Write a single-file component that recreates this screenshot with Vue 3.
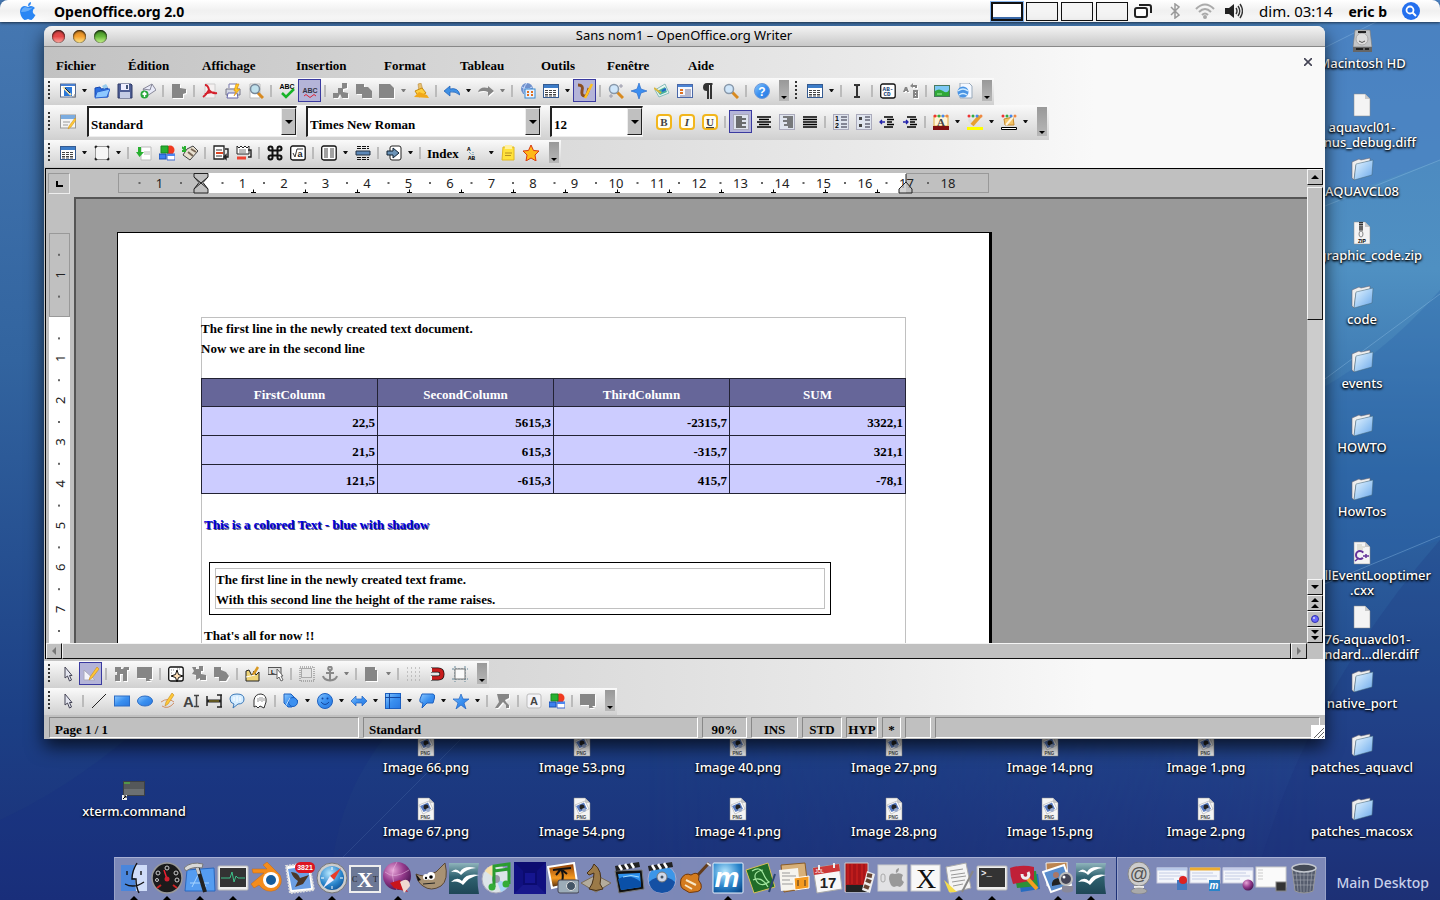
<template>
  <div class="desktop">
    <svg class="wallpaper" viewBox="0 0 1440 900" preserveAspectRatio="none" aria-hidden="true">
      <defs>
        <linearGradient id="glass" x1="0" y1="0" x2="1" y2="1"><stop offset="0" stop-color="#e8f5ff"/><stop offset=".5" stop-color="#a8d0f6"/><stop offset="1" stop-color="#6aa6ea"/></linearGradient>
        <linearGradient id="blue" x1="0" y1="0" x2="1" y2="1"><stop offset="0" stop-color="#8cc8ff"/><stop offset=".5" stop-color="#3a90f0"/><stop offset="1" stop-color="#2a78e0"/></linearGradient>
        <linearGradient id="sea" x1="0" y1="0" x2="0" y2="1"><stop offset="0" stop-color="#8fb4bc"/><stop offset=".45" stop-color="#2f6270"/><stop offset="1" stop-color="#1e4656"/></linearGradient>
        <linearGradient id="sunset" x1="0" y1="0" x2="0" y2="1"><stop offset="0" stop-color="#8a3a08"/><stop offset=".6" stop-color="#f59a20"/><stop offset="1" stop-color="#40200c"/></linearGradient>
        <radialGradient id="purple" cx=".35" cy=".3" r=".8"><stop offset="0" stop-color="#e7a6d8"/><stop offset=".5" stop-color="#953a8c"/><stop offset="1" stop-color="#3c1048"/></radialGradient>
        <radialGradient id="ocean" cx=".4" cy=".3" r=".8"><stop offset="0" stop-color="#b8e8ff"/><stop offset=".6" stop-color="#2b86cc"/><stop offset="1" stop-color="#0c4c90"/></radialGradient>
        <linearGradient id="sky" x1="0" y1="0" x2="0" y2="1"><stop offset="0" stop-color="#4678b2"/><stop offset=".4" stop-color="#32649f"/><stop offset=".8" stop-color="#1c3f85"/><stop offset="1" stop-color="#1b2f78"/></linearGradient>
        <linearGradient id="east" x1="0" y1="0" x2="0" y2="1"><stop offset="0" stop-color="#4a83bf"/><stop offset=".3" stop-color="#4f90c2"/><stop offset=".52" stop-color="#3169a6"/><stop offset=".72" stop-color="#255092"/><stop offset=".9" stop-color="#203a83"/><stop offset="1" stop-color="#1e3175"/></linearGradient>
        <linearGradient id="fade" x1="0" y1="0" x2="1" y2="0"><stop offset=".45" stop-color="#000"/><stop offset=".92" stop-color="#fff"/></linearGradient>
        <mask id="half"><rect width="1440" height="900" fill="url(#fade)"/></mask>
      </defs>
      <rect width="1440" height="900" fill="url(#sky)"/>
      <rect width="1440" height="900" fill="url(#east)" mask="url(#half)"/>
      <path d="M0 820Q130 760 240 620L420 700Q330 780 330 900H0Z" fill="#183080" opacity=".3"/>
      <path d="M1250 900Q1300 700 1440 540V900Z" fill="#1b2f78" opacity=".2"/>
      <path d="M1280 120L1340 0H1440V160L1300 210Z" fill="#4a7fc4" opacity=".5"/>
      <path d="M1300 400Q1380 360 1440 290V540L1300 590Z" fill="#2c64a8" opacity=".35"/>
      <path d="M1270 75L1380 20M1290 220L1440 160M1310 390L1440 294M1310 590L1440 536" stroke="#9cc8ec" stroke-opacity=".35" fill="none"/>
      <path d="M330 870L480 720" stroke="#9cc8ec" stroke-opacity=".12" fill="none"/>
    </svg>

    <header class="menubar">
      <svg class="apple" viewBox="0 0 16 18" width="16" height="18"><path d="M11 0Q8 .6 8 4Q11 4 11 0ZM8 5Q6 4 4 4Q0 5 0 10Q1 16 4.500 18Q6 18 8 17Q10 18 11.500 18Q14 16 15.500 13Q12.500 11.500 12.800 9Q13 7 15 6Q13 4 11 4Q9.500 4.200 8 5Z" fill="#2a86f4"/><path d="M1 10Q2 6 5 5Q10 7 13 5Q10 10 1 10Z" fill="#8cc6ff" opacity=".6"/></svg>
      <strong class="app-name">OpenOffice.org 2.0</strong>
      <div class="pager"><i v-for="n in 4" :key="n" :class="{ current: n === 1 }"></i></div>
      <svg viewBox="0 0 18 16" width="18" height="16" fill="none" stroke="#222" stroke-width="2"><rect x="1" y="5" width="12" height="9" rx="2" fill="#fff"/><path d="M5 2H15Q17 2 17 4V10"/></svg>
      <svg class="bt" viewBox="0 0 10 16" width="10" height="16" fill="none" stroke="#999" stroke-width="1.500"><path d="M1 4L9 12L5 15V1L9 4L1 12"/></svg>
      <svg viewBox="0 0 20 16" width="20" height="16" fill="none" stroke="#aaa" stroke-width="2"><path d="M1 6Q10 -3 19 6M4 9Q10 3 16 9M7 12Q10 9 13 12"/><circle cx="10" cy="14" r="1" fill="#aaa"/></svg>
      <svg viewBox="0 0 18 16" width="18" height="16"><path d="M0 5H4L9 1V15L4 11H0Z" fill="#222"/><path d="M11 5Q13 8 11 11M13 3Q16.500 8 13 13M15 1Q20 8 15 15" fill="none" stroke="#333" stroke-width="1.400"/></svg>
      <span class="clock">dim. 03:14</span>
      <strong class="user">eric b</strong>
      <svg class="spot" viewBox="0 0 18 18" width="18" height="18"><circle cx="9" cy="9" r="9" fill="#2470ee"/><circle cx="8" cy="8" r="3.500" fill="none" stroke="#fff" stroke-width="1.800"/><path d="M10.500 10.500L14 14" stroke="#fff" stroke-width="2"/></svg>
    </header>

    <div class="volumes">
      <figure v-for="f in volumes" :key="f.label" class="file">
        <svg viewBox="0 0 24 24" width="24" height="24" v-html="files[f.icon]"></svg>
        <figcaption>{{ f.label }}</figcaption>
      </figure>
    </div>
    <div class="shots">
      <figure v-for="n in shots" :key="n" class="file">
        <svg viewBox="0 0 24 24" width="24" height="24" v-html="files.png"></svg>
        <figcaption>Image {{ n }}.png</figcaption>
      </figure>
    </div>
    <figure class="file xterm">
      <svg viewBox="0 0 24 24" width="24" height="24" v-html="files.term"></svg>
      <figcaption>xterm.command</figcaption>
    </figure>

    <main class="window">
      <div class="titlebar">
        <div class="lights">
          <button class="red" aria-label="Fermer"></button>
          <button class="amber" aria-label="Réduire"></button>
          <button class="green" aria-label="Agrandir"></button>
        </div>
        <h1>Sans nom1 – OpenOffice.org Writer</h1>
      </div>

      <nav class="menus">
        <button v-for="m in menus" :key="m.label" :style="{ width: m.width + 'px' }">{{ m.label }}</button>
        <button class="close-doc" aria-label="Fermer le document"><svg viewBox="0 0 8 8" width="8" height="8"><path d="M0 0L8 8M8 0L0 8" stroke="#445" stroke-width="1.600"/></svg></button>
      </nav>

      <div v-for="(row, r) in topRows" :key="r" class="row" :class="{ tall: r === 1 }">
        <div v-for="(bar, b) in row" :key="b" class="bar">
          <i class="grip"></i>
          <template v-for="(t, i) in bar" :key="i">
            <i v-if="t === '|'" class="sep"></i>
            <button v-else-if="t === 'v' || t === 'g'" class="drop" :class="{ dim: t === 'g' }" aria-label="Options"></button>
            <div v-else-if="t === 'combos'" class="combos">
              <label v-for="c in combos" :key="c.label" class="combo" :class="c.size">
                <select :aria-label="c.label"><option>{{ c.value }}</option></select><i></i>
              </label>
            </div>
            <button v-else-if="t === 'Index'" class="word">Index</button>
            <button v-else class="tool" :class="{ on: t[0] === '*' }" :aria-label="t.replace('*', '')">
              <svg viewBox="0 0 16 16" width="16" height="16" v-html="icons[t.replace('*', '')]"></svg>
            </button>
          </template>
          <button class="more" aria-label="Plus"></button>
        </div>
      </div>

      <section class="editor">
        <div class="view">
          <div class="top-ruler">
            <button class="tab-kind" aria-label="Tabulation"><svg viewBox="0 0 8 8" width="8" height="8"><path d="M1 1V6H7" fill="none" stroke="#000" stroke-width="2"/></svg></button>
            <svg width="872" height="21" viewBox="0 0 872 21">
              <rect x=".5" y=".5" width="870" height="19" fill="#c0c0c0" stroke="#999"/>
              <rect x="83" y="0" width="705" height="20" fill="#fff"/>
              <text v-for="n in 20" :key="n" :x="n * 41.5" y="15">{{ n === 2 ? '' : Math.abs(n - 2) }}</text>
              <rect v-for="n in 20" :key="'d' + n" :x="n * 41.5 - 21" y="9" width="2" height="2" fill="#666"/>
              <path v-for="n in 13" :key="'t' + n" :d="`M${n * 52 + 81} 19.500h5m-2.500 0v-3`" stroke="#000" fill="none"/>
              <path d="M76 .5H90V4L85 9.500L90 16V20H76V16L81 9.500L76 4Z" fill="#c0c0c0" stroke="#222"/><path d="M76 4L90 16M90 4L76 16" stroke="#222"/>
              <path d="M788 1V9M788 9L794 16V20H781V16Z" fill="#c0c0c0" fill-opacity=".7" stroke="#222"/>
            </svg>
          </div>
          <div class="pane">
            <div class="side-ruler">
              <svg width="22" height="446" viewBox="0 0 22 446">
                <rect x=".5" y="36.500" width="20" height="83" fill="#c0c0c0" stroke="#999"/>
                <rect x="0" y="120" width="21" height="330" fill="#fff"/>
                <text v-for="n in 9" :key="n" x="0" y="0" :transform="`translate(16 ${n * 41.8 + 36}) rotate(-90)`">{{ n === 2 ? '' : Math.abs(n - 2) }}</text>
                <rect v-for="n in 10" :key="'d' + n" x="9" :y="n * 41.8 + 15" width="2" height="2" fill="#666"/>
              </svg>
            </div>
            <div class="canvas">
              <article class="page">
                <div class="text-area">
                  <p>The first line in the newly created text document.</p>
                  <p>Now we are in the second line</p>
                  <table>
                    <thead><tr><th v-for="h in head" :key="h">{{ h }}</th></tr></thead>
                    <tbody><tr v-for="line in body" :key="line[0]"><td v-for="c in line" :key="c">{{ c }}</td></tr></tbody>
                  </table>
                  <p class="blue">This is a colored Text - blue with shadow</p>
                  <div class="text-frame">
                    <div>
                      <p>The first line in the newly created text frame.</p>
                      <p>With this second line the height of the rame raises.</p>
                    </div>
                  </div>
                  <p class="last">That's all for now !!</p>
                </div>
              </article>
            </div>
          </div>
          <div class="hscroll">
            <button aria-label="Gauche"><svg viewBox="0 0 8 8" width="8" height="8"><path d="M6 0V8L2 4Z" fill="#777"/></svg></button>
            <i class="thumb"></i>
            <button aria-label="Droite"><svg viewBox="0 0 8 8" width="8" height="8"><path d="M2 0V8L6 4Z" fill="#777"/></svg></button>
          </div>
        </div>
        <div class="vscroll">
          <button aria-label="Haut"><svg viewBox="0 0 8 8" width="8" height="8"><path d="M0 6H8L4 2Z"/></svg></button>
          <i class="thumb"></i>
          <i class="track"></i>
          <button aria-label="Bas"><svg viewBox="0 0 8 8" width="8" height="8"><path d="M0 2H8L4 6Z"/></svg></button>
          <button aria-label="Page précédente"><svg viewBox="0 0 8 10" width="8" height="10"><path d="M0 4H8L4 0ZM0 10H8L4 6Z"/></svg></button>
          <button aria-label="Navigation"><svg viewBox="0 0 8 8" width="8" height="8"><circle cx="4" cy="4" r="3.500" fill="#66f" stroke="#33a"/><circle cx="3" cy="3" r="1" fill="#dde"/></svg></button>
          <button aria-label="Page suivante"><svg viewBox="0 0 8 10" width="8" height="10"><path d="M0 0H8L4 4ZM0 6H8L4 10Z"/></svg></button>
          <i class="corner"></i>
        </div>
      </section>

      <div v-for="(bar, r) in drawRows" :key="r" class="row">
        <div class="bar">
          <i class="grip"></i>
          <template v-for="(t, i) in bar" :key="i">
            <i v-if="t === '|'" class="sep"></i>
            <button v-else-if="t === 'v' || t === 'g'" class="drop" :class="{ dim: t === 'g' }" aria-label="Options"></button>
            <button v-else class="tool" :class="{ on: t[0] === '*' }" :aria-label="t.replace('*', '')">
              <svg viewBox="0 0 16 16" width="16" height="16" v-html="icons[t.replace('*', '')]"></svg>
            </button>
          </template>
          <button class="more" aria-label="Plus"></button>
        </div>
      </div>

      <footer class="status">
        <span v-for="(s, i) in status" :key="i" :class="{ centered: i > 1 }" :style="{ width: s.width + 'px' }">{{ s.text }}</span>
        <span class="rest"></span>
        <svg class="resize" viewBox="0 0 14 14" width="14" height="14"><rect width="14" height="14" fill="#fff"/><path d="M3 13L13 3M7 13L13 7M11 13L13 11" stroke="#666"/></svg>
      </footer>
    </main>

    <div class="dock">
      <div class="dock-apps">
        <button v-for="(a, i) in apps" :key="i" :class="{ running: a[0] === '*' }" :aria-label="a.replace('*', '')">
          <svg viewBox="0 0 32 32" width="32" height="32" v-html="dock[a.replace('*', '')]"></svg>
        </button>
      </div>
      <div class="dock-docs">
        <button v-for="a in docs" :key="a" :aria-label="a"><svg viewBox="0 0 32 32" width="32" height="32" v-html="dock[a]"></svg></button>
      </div>
    </div>
    <span class="space-name">Main Desktop</span>
  </div>
</template>

<script setup>
const menus = [
  {label: 'Fichier', width: 72},
  {label: 'Édition', width: 74},
  {label: 'Affichage', width: 94},
  {label: 'Insertion', width: 88},
  {label: 'Format', width: 76},
  {label: 'Tableau', width: 81},
  {label: 'Outils', width: 66},
  {label: 'Fenêtre', width: 81},
  {label: 'Aide', width: 60},
];

const combos = [
  {label: 'Style', value: 'Standard', size: 'medium'},
  {label: 'Police', value: 'Times New Roman', size: 'large'},
  {label: 'Taille', value: '12', size: 'small'},
];

const status = [
  {text: 'Page 1 / 1', width: 310},
  {text: 'Standard', width: 335},
  {text: '90%', width: 45},
  {text: 'INS', width: 47},
  {text: 'STD', width: 40},
  {text: 'HYP', width: 32},
  {text: '*', width: 19},
  {text: '', width: 26},
];

// "|" séparateur, "v" flèche, "g" flèche grisée, "*" bouton enfoncé
const bar = (s) => s.split(' ');
const topRows = [
  [
    bar('new v open save mail | edit | pdf print preview | spell *abc | cut copy paste g brush | undo v redo g | web table v *draw | find compass gallery source pilcrow zoom | help'),
    bar('table v | ibeam | abcd swap | image html'),
  ],
  [bar('styles combos bold italic under | *left center right justify | numbers bullets outdent indent | fontcolor v marker v bucket v')],
  [bar('table v frame v | insert shapes object | section note | command formula | columns v header | goto v | Index ab v sticky star')],
];
const drawRows = [
  bar('cursor *pencil | wizard flat | pick puzzle group | crown button | dotframe anchor g | flatpage g | dots magnet snap'),
  bar('cursor | line rect ellipse freehand text hline balloon ghost | basic v smile v arrows v flow v callout v bstar v | points | fontwork shapes | flat'),
];

const head = ['FirstColumn', 'SecondColumn', 'ThirdColumn', 'SUM'];
const body = [
  ['22,5', '5615,3', '-2315,7', '3322,1'],
  ['21,5', '615,3', '-315,7', '321,1'],
  ['121,5', '-615,3', '415,7', '-78,1'],
];

const volumes = [
  {icon: 'disk', label: 'Macintosh HD'},
  {icon: 'page', label: 'aquavcl01-\nminus_debug.diff'},
  {icon: 'folder', label: 'AQUAVCL08'},
  {icon: 'zip', label: 'vclgraphic_code.zip'},
  {icon: 'folder', label: 'code'},
  {icon: 'folder', label: 'events'},
  {icon: 'folder', label: 'HOWTO'},
  {icon: 'folder', label: 'HowTos'},
  {icon: 'cxx', label: 'InstallEventLooptimer\n.cxx'},
  {icon: 'page', label: 'i576-aquavcl01-\nstandard…dler.diff'},
  {icon: 'folder', label: 'native_port'},
  {icon: 'folder', label: 'patches_aquavcl'},
  {icon: 'folder', label: 'patches_macosx'},
];
const shots = [66, 53, 40, 27, 14, 1, 67, 54, 41, 28, 15, 2];

const sheet = '<path d="M4 1H15L20 6V23H4Z" fill="#f4f4f4" stroke="#888" stroke-width=".5"/><path d="M15 1V6H20Z" fill="#c8c8c8"/>';
const files = {
  page: sheet,
  folder: '<path d="M2 5L9 2L11 3L20 1V4L6 8L4 23L2 21Z" fill="#eee" stroke="#667" stroke-width=".6"/><path d="M6 7L23 3L22 18L4 23Z" fill="url(#glass)" stroke="#467" stroke-width=".5"/>',
  zip: sheet + '<path d="M11 1V10" stroke="#333" stroke-width="4" stroke-dasharray="1.500 .6"/><ellipse cx="11" cy="13" rx="2" ry="3" fill="none" stroke="#888"/><text x="8" y="22" font-size="5" font-weight="bold" font-family="Liberation Sans, sans-serif">ZIP</text>',
  cxx: sheet + '<path d="M7 4H12M7 6H15M7 8H13" stroke="#ccb"/><circle cx="10" cy="14" r="4" fill="none" stroke="#639" stroke-width="2" stroke-dasharray="19 6" stroke-dashoffset="-3"/><path d="M5 20L9 17M13 15H19M16 13V17" stroke="#639" stroke-width="1.500"/>',
  png: sheet + '<path d="M5 8L15 4L19 12L9 17Z" fill="#fff" stroke="#999" stroke-width=".5"/><path d="M6 9L14 5.500L17 12L9.500 15Z" fill="#5a7cc0"/><circle cx="12" cy="10" r="2.500" fill="#222"/><circle cx="14" cy="13" r="2" fill="#9ac"/><text x="6.500" y="22" font-size="4.500" font-weight="bold" fill="#444" font-family="Liberation Sans, sans-serif" style="text-shadow:none">PNG</text>',
  disk: '<path d="M5 1H20L22 18H3Z" fill="#c4c6c8" stroke="#777" stroke-width=".6"/><path d="M3 18H22V23H3Z" fill="#666"/><path d="M6 20H13M15 20H19" stroke="#222" stroke-width="2"/><circle cx="12" cy="10" r="6" fill="#ddd" stroke="#aaa"/><path d="M8 3H16" stroke="#222" stroke-width="2"/><path d="M9 12Q12 15 15 12" fill="none" stroke="#555"/>',
  term: '<rect x="1.500" y="4.500" width="21" height="14" fill="#55585a" stroke="#3c4044"/><path d="M2 6H8" stroke="#5a4" stroke-width="1.500"/><path d="M2 12H22V18H2Z" fill="#84888a" opacity=".5"/><path d="M0 18H5V23H0Z" fill="#eee"/><path d="M1 22L4 19M2 19H4V21" stroke="#000" fill="none"/>',
};

const tab = '<rect x=".5" y="1.500" width="15" height="13" fill="#fff" stroke="#345a90"/><path d="M1 2H15V5H1Z" fill="#3c7cc8"/><path d="M2 7.500H14M2 9.500H14M2 11.500H14M2 13H14" stroke="#444" stroke-dasharray="3 1"/>';
const box = '<rect x=".7" y="1" width="14.500" height="14" rx="2" fill="#fff" stroke="#111" stroke-width="1.300"/>';
const gold = '<rect x="1" y="1" width="14" height="14" rx="3" fill="#fffef4" stroke="#f2b61c" stroke-width="2"/>';
const lens = '<path d="M9 9L15 15" stroke="#d88a20" stroke-width="3"/><circle cx="6" cy="6" r="4.500" fill="#cfe6fa" stroke="#8898aa" stroke-width="1.500"/>';
const tile = '<rect x=".5" y=".5" width="15" height="15" fill="#dfe4ee" stroke="#aab"/>';
const letter = (c, style = '') => `<text x="8" y="12" text-anchor="middle" font-size="11" font-weight="bold" font-family="Liberation Serif, serif" fill="#444" ${style}>${c}</text>`;
const beads = '<circle cx="2" cy="2" r="1.500" fill="#e33"/><circle cx="6" cy="2" r="1.500" fill="#3a4"/><circle cx="10" cy="2" r="1.500" fill="#48e"/><circle cx="14" cy="2" r="1.500" fill="#e84"/>';
const grey = (d) => `<path d="${d}" transform="translate(1 1)" fill="#fff"/><path d="${d}" fill="#868686"/>`;

const icons = {
  new: '<rect x=".5" y="1" width="15" height="13" fill="#fff" stroke="#556a90"/><path d="M1 2H15" stroke="#4a80d0" stroke-width="2"/><path d="M4 4H12V13H4Z" fill="#2c78d8"/><path d="M3 4L11 12" stroke="#f2e2ac" stroke-width="2"/><path d="M5 5L10 10" stroke="#123" stroke-width="1"/><path d="M12 14H15V11" fill="#ccc" stroke="#888"/>',
  open: '<path d="M1 5L6 4L7 6L14 5V14H1Z" fill="#2a6ee0" stroke="#1648b0"/><path d="M8 3L12 1L14 4L10 6Z" fill="#9ce"/><path d="M3 9L16 6L13 14L1 15Z" fill="#8ec8ff" stroke="#2a62d0"/>',
  save: '<path d="M1 1H14L15 2V15H1Z" fill="#4e5e94" stroke="#2e3a68"/><path d="M4 1H12V7H4Z" fill="#eef"/><path d="M9 2H11V6H9Z" fill="#457"/><path d="M3 9H13V15H3Z" fill="#c4cce4"/>',
  mail: '<path d="M3 6L12 1L16 7L7 13Z" fill="#e8eaf8" stroke="#889"/><path d="M3 6L10 7L12 1" fill="none" stroke="#889"/><circle cx="4.500" cy="11.500" r="4" fill="#28a83c"/><path d="M4.500 14V10M2.500 11.500L4.500 9.500L6.500 11.500" stroke="#fff" stroke-width="1.400" fill="none"/>',
  edit: grey('M1 1H9V5L15 6V10L12 11V15H1Z'),
  pdf: '<path d="M3 1H13V15H3Z" fill="#f4f0f0" stroke="#ccc"/><path d="M3 2Q6 2 7 7Q10 11 15 10M7 7Q4 12 1 14M3 11Q8 8 13 10" fill="none" stroke="#d4202c" stroke-width="2"/>',
  print: '<path d="M4 5V1H12V5" fill="#fff" stroke="#77a"/><path d="M1 6H15V12H1Z" fill="#d4d8e4" stroke="#778"/><path d="M3 10H12L13 15H2Z" fill="#fff" stroke="#66a"/><path d="M11 1L14 1L12 6H15L9 13L11 8H9Z" fill="#ffc820" stroke="#d98a10" stroke-width=".6"/>',
  preview: '<path d="M2 1H12V15H2Z" fill="#fff" stroke="#bbb"/><path d="M9 9L15 15" stroke="#d88a20" stroke-width="3"/><circle cx="7" cy="6" r="4.500" fill="#bfe0ec" stroke="#789" stroke-width="1.500"/>',
  spell: '<text x="8" y="6" text-anchor="middle" font-size="7" font-weight="bold" font-family="Liberation Sans, sans-serif">ABC</text><path d="M3 10L7 14L15 6" fill="none" stroke="#18b428" stroke-width="2.500"/>',
  abc: '<text x="8" y="10" text-anchor="middle" font-size="7" font-weight="bold" fill="#334" font-family="Liberation Sans, sans-serif">ABC</text><path d="M2 13Q4 10 6 13T10 13T14 13" fill="none" stroke="#d23"/>',
  cut: grey('M9 0H14V5L10 6V9L15 10V15H9L7 11L5 15H0V10H5V5H9Z'),
  copy: grey('M0 1H8V4H12L16 8V15H6V11H0Z'),
  paste: grey('M0 1H11L15 5V15H0Z'),
  brush: '<path d="M5 1L8 0L10 7L6 9Z" fill="#e8c070" stroke="#b08030" stroke-width=".5"/><path d="M2 8L9 5L13 10L6 14Z" fill="#ffd040" stroke="#c88c10"/><path d="M1 14L6 9L14 12L16 15Z" fill="#f2a818"/>',
  undo: '<path d="M0 8L6 3V6Q14 4 16 12Q11 8 6 9V13Z" fill="#3f90e4" stroke="#1b5cb4" stroke-width=".7"/>',
  redo: grey('M16 8L10 3V5Q2 3 0 9Q6 7 10 9V13Z'),
  web: '<circle cx="7" cy="6" r="6" fill="#6e90cc"/><path d="M2 4Q7 8 12 4M7 0Q2 5 5 12" stroke="#cdf" fill="none"/><rect x="5" y="6" width="10" height="9" fill="#e8f2ff" stroke="#3b8ad0"/><path d="M7 9H9M7 12H9M11 9H13M11 12H13" stroke="#e07020" stroke-width="2"/>',
  table: tab,
  draw: '<path d="M1 2Q7 2 5 8Q4 13 8 13Q10 13 12 5" fill="none" stroke="#8c5020" stroke-width="3"/><path d="M15 1L10 11L8 15" stroke="#ffc020" stroke-width="2.500"/>',
  find: lens + '<path d="M11 3H15M13 1V5M1 13H5M3 11V15" stroke="#99a"/>',
  compass: '<path d="M8 0L10 6L16 8L10 10L8 16L6 10L0 8L6 6Z" fill="#3c8ef0" stroke="#2164c8" stroke-width=".6"/>',
  gallery: '<path d="M1 7L11 1L15 10L5 14Z" fill="#e8f6f0" stroke="#8bb"/><path d="M3 8L11 4L13 9L6 12Z" fill="#46b0a0"/><path d="M0 5L7 10" stroke="#d8b840" stroke-width="2"/><path d="M8 8L12 6" stroke="#2464c8" stroke-width="2"/>',
  source: '<rect x=".5" y="1.500" width="15" height="13" fill="#f4f8ff" stroke="#4a68a8"/><path d="M1 3H15" stroke="#4c84d4" stroke-width="2"/><path d="M3 7H6M3 10H6" stroke="#e07020" stroke-width="2"/><path d="M8 7H14M8 9H14M8 11H14M3 13H14" stroke="#779"/>',
  pilcrow: '<path d="M12.500 0H7Q3 0 3 4.500Q3 8 7 8V16H9V2H10V16H12V2H12.500Z" fill="#333"/>',
  zoom: lens,
  help: '<circle cx="8" cy="8" r="7.500" fill="url(#blue)" stroke="#6b98d8"/><text x="8" y="12.500" text-anchor="middle" font-size="12" font-weight="bold" fill="#fff" font-family="Liberation Sans, sans-serif">?</text>',
  ibeam: '<path d="M5 2H7L8 3L9 2H11M8 3V13M5 14H7L8 13L9 14H11" fill="none" stroke="#333" stroke-width="2"/>',
  abcd: box + '<text x="8" y="8" text-anchor="middle" font-size="6" font-weight="bold" fill="#123a70" font-family="Liberation Mono, monospace">AB-</text><text x="7" y="13" text-anchor="middle" font-size="6" font-weight="bold" fill="#123a70" font-family="Liberation Mono, monospace">CD</text>',
  swap: grey('M0 9L2 4H4L6 9H4V8H2V9ZM7 3L10 0V2H14V5H12V4H10V5ZM10 7H15V15H10Z') + '<path d="M12 9H13V10H12ZM12 12H13V13H12Z" fill="#fff"/>',
  image: '<rect x=".5" y="2.500" width="15" height="11" fill="#7cc8f4" stroke="#4a7a60"/><path d="M1 8Q5 5 9 8T15 7V13H1Z" fill="#30a838"/><path d="M3 11H8" stroke="#9cf0a0"/>',
  html: '<path d="M3 0H12L15 3V15H3Z" fill="#f4f8ff" stroke="#9ab"/><circle cx="6" cy="9" r="5.500" fill="#4a94e4"/><path d="M1 8Q6 4 11 8M2 12Q6 9 10 12" stroke="#d0ecff" stroke-width="1.500" fill="none"/>',
  styles: '<rect x=".5" y="1" width="15" height="13" fill="#f4f4f4" stroke="#999"/><path d="M1 1H15V5H1Z" fill="#7cacdf"/><path d="M3 8H10M3 11H8" stroke="#999"/><path d="M15 4L9 12L8 15L11 13L16 6Z" fill="#ffc838" stroke="#c88c18" stroke-width=".5"/>',
  bold: gold + letter('B'),
  italic: gold + letter('I', 'font-style="italic"'),
  under: gold + letter('U', 'text-decoration="underline"'),
  left: tile + '<path d="M3 3H9M3 5H13M3 7H9M3 9H13M3 11H9M3 13H13" stroke="#444" stroke-width="1.500"/>',
  center: '<path d="M1 3H15M3 5.500H13M1 8H15M3 10.500H13M1 13H15" stroke="#000" stroke-width="1.300"/>',
  right: tile + '<path d="M4 3H14M8 5H14M4 7H14M8 9H14M5 11H14M9 13H14" stroke="#555" stroke-width="1.500"/>',
  justify: '<path d="M1 3H15M1 5.500H15M1 8H15M1 10.500H15M1 13H15" stroke="#000" stroke-width="1.300"/>',
  numbers: tile + '<text x="2" y="7" font-size="7" font-family="Liberation Sans, sans-serif">1</text><text x="2" y="14" font-size="7" font-family="Liberation Sans, sans-serif">2</text><path d="M8 3H14M8 6H14M8 10H14M8 13H14" stroke="#667" stroke-width="1.500"/>',
  bullets: tile + '<path d="M3 3H6V6H3ZM3 10H6V13H3Z" fill="#444"/><path d="M9 3H14M9 6H14M9 10H14M9 13H14" stroke="#667" stroke-width="1.500"/>',
  outdent: '<path d="M5 3H14M8 5.500H15M8 8H13M8 10.500H15M5 13H14" stroke="#000" stroke-width="1.300"/><path d="M1 8H6M3 6L1 8L3 10" stroke="#22a" stroke-width="1.300" fill="none"/>',
  indent: '<path d="M5 3H14M8 5.500H15M8 8H13M8 10.500H15M5 13H14" stroke="#000" stroke-width="1.300"/><path d="M1 8H6M4 6L6 8L4 10" stroke="#22a" stroke-width="1.300" fill="none"/>',
  fontcolor: '<rect x="1" y="2" width="14" height="10" fill="#fff4d8" stroke="#e4b040"/>' + beads + letter('A') + '<path d="M0 12H16V16H0Z" fill="#801010"/>',
  marker: '<path d="M2 4L9 11L6 12L1 7Z" fill="#ddd"/><path d="M13 2L5 11" stroke="#e8a030" stroke-width="4"/>' + beads + '<path d="M0 13H16V16H0Z" fill="#ff0"/>',
  bucket: '<path d="M3 5L12 3L13 11H4Z" fill="#f4c468" stroke="#c88c30"/><path d="M12 3L5 11" stroke="#fff4dc" stroke-width="2"/>' + beads + '<path d="M.5 13.500H15.500V15.500H.5Z" fill="#fff" stroke="#000"/>',
  frame: '<rect x="1.500" y="1.500" width="13" height="13" fill="#f6f6f6" stroke="#999"/><path d="M1 1H3V2H2V3H1ZM13 1H15V3H14V2H13ZM1 13H2V14H3V15H1ZM14 13H15V15H13V14H14Z" fill="#222" stroke="#222" stroke-width=".6"/>',
  insert: '<path d="M5 2H15V15H5Z" fill="#fff" stroke="#bbb"/><path d="M2 2H5V7H8L3.500 12L0 7H2Z" fill="#28b030"/><path d="M8 8H14" stroke="#ddd" stroke-width="4"/>',
  shapes: '<circle cx="11" cy="5" r="4.500" fill="#f03a20"/><path d="M2 1H9V8H2Z" fill="#28b030" stroke="#178a20"/><path d="M0 9H7V14H0Z" fill="#3c80f0" stroke="#1c50b0"/><path d="M8 9H16V15H8Z" fill="#fff" stroke="#3c68d0"/><path d="M8 9H16V11H8Z" fill="#4c88f0"/>',
  object: '<path d="M5 4L11 1L16 6L8 15L1 10Z" fill="#e8e0d0" stroke="#444"/><path d="M6 7L11 11M9 4L14 7" stroke="#765" stroke-width="2"/><path d="M0 2L3 5M3 1V6H0" stroke="#28b030" stroke-width="2" fill="none"/>',
  section: '<path d="M1 1H11V14H1Z" fill="#fff" stroke="#222" stroke-width="1.300"/><path d="M3 5H9M3 11H9" stroke="#333"/><path d="M3 8H10" stroke="#d42" stroke-width="2"/><path d="M12 4H15V12H12M11 12L13 10V14Z" fill="none" stroke="#222" stroke-width="1.400"/>',
  note: '<path d="M1 1L3 3L5 1L7 3L9 1L11 3L13 1V9H1Z" fill="#fff" stroke="#222"/><path d="M3 5H10M3 7H10" stroke="#777"/><path d="M1 13H10" stroke="#e43" stroke-width="3"/><path d="M12 5H15V12H12" fill="none" stroke="#222" stroke-width="1.400"/>',
  command: '<path d="M5.500 5.500V3.500A2 2 0 1 0 3.500 5.500H12.500A2 2 0 1 0 10.500 3.500V12.500A2 2 0 1 0 12.500 10.500H3.500A2 2 0 1 0 5.500 12.500Z" fill="none" stroke="#111" stroke-width="2"/>',
  formula: box + '<path d="M3 8L5 12L7 4H13" fill="none" stroke="#333"/><text x="10" y="12" text-anchor="middle" font-size="9" fill="#222" font-family="Liberation Sans, sans-serif">a</text>',
  columns: box + '<path d="M3 4H7M3 6H7M3 8H7M3 10H7M3 12H7M9 4H13M9 6H13M9 8H13M9 10H13M9 12H13" stroke="#444"/>',
  header: '<path d="M2 1.500H14M2 3.500H14M2 12.500H14M2 14.500H14" stroke="#111" stroke-dasharray="4 1"/><path d="M1 6H15V10H1Z" fill="#5c88b8" stroke="#234"/>',
  goto: '<rect x="4" y="1" width="11" height="14" rx="2" fill="#fff" stroke="#222"/><path d="M1 6H7V3L13 8L7 13V10H1Z" fill="#6c94b8" stroke="#123"/>',
  ab: '<text x="1" y="6" font-size="6" font-weight="bold" font-family="Liberation Mono, monospace">A</text><path d="M3 7L6 10M7 7V10" stroke="#48a" stroke-dasharray="1 1"/><text x="2" y="15" font-size="6" font-weight="bold" font-family="Liberation Mono, monospace">AB</text>',
  sticky: '<path d="M3 2H14V15H2Z" fill="#ffe23c" stroke="#e0b820"/><path d="M5 8H12M5 10.500H11" stroke="#b89020"/><path d="M5 0H12V4H5Z" fill="#fff0a0"/>',
  star: '<path d="M8 0L10.500 5.500L16 6L12 10L13 16L8 13L3 16L4 10L0 6L5.500 5.500Z" fill="#ffb818" stroke="#d83810"/>',
  cursor: '<path d="M5 1V12L7.500 10L9.500 15L11.500 14L9.500 9.500H12Z" fill="#e4e6f0" stroke="#445"/>',
  pencil: '<path d="M1 4V14H12Z" fill="#f4f4fc" stroke="#aab"/><path d="M14 1L7 11L6 14L9 12L16 3Z" fill="#ffc638" stroke="#c88c18" stroke-width=".6"/>',
  wizard: grey('M1 1H7V3H9L10 1H15V4H13V15H9V8L6 8V15H1V9H3V6H1Z'),
  flat: grey('M0 1H15V13H12L14 15H9V12H0Z'),
  pick: box + '<path d="M3 4H6M3 7H5M9 3H12" stroke="#888" stroke-dasharray="1 1"/><path d="M9 4L10.500 8.500L15 10L10.500 11.500L9 16L7.500 11.500L3 10L7.500 8.500Z" fill="#ffe0b8" stroke="#111"/>',
  puzzle: grey('M1 1H5V3H8V0H12V5H10V8L15 9V14H9V12L5 14V9L1 8L3 5Z'),
  group: grey('M0 1H7V4L12 6L15 10L12 15H5V11H0Z'),
  crown: '<path d="M1 5V15H14V6L11 9L9 5L7 10L4 4Z" fill="#efd478" stroke="#222"/><path d="M13 1L8 9" stroke="#d89820" stroke-width="2.500"/><path d="M1 11L10 9" stroke="#fff"/>',
  button: '<rect x="0" y="1.500" width="13" height="7" fill="#ddd" stroke="#555"/><text x="3" y="8" font-size="6" font-family="Liberation Sans, sans-serif">L</text><path d="M9 3V13L11 11L13 15L15 14L13 10H15Z" fill="#fff" stroke="#666"/>',
  dotframe: '<rect x="1" y="1" width="14" height="14" fill="none" stroke="#777" stroke-dasharray="1 1"/><rect x="2.500" y="2.500" width="10" height="9" fill="#e4e4e4" stroke="#aaa"/>',
  anchor: '<g fill="none" stroke="#888" stroke-width="2"><circle cx="8" cy="2.500" r="1.800"/><path d="M8 4V14M4 7H12M1 10Q2 14 8 14.500Q14 14 15 10"/></g>',
  flatpage: grey('M1 1H11V4H13V15H1Z'),
  dots: '<path d="M1 2H15M1 6H15M1 10H15M1 14H15" stroke="#999" stroke-dasharray="1 3"/>',
  magnet: '<path d="M2 4H9Q13 4 13 8T9 12H2" fill="none" stroke="#111" stroke-width="5"/><path d="M2 4H9Q13 4 13 8T9 12H2" fill="none" stroke="#c81c1c" stroke-width="3.500"/><path d="M2 2V6M2 10V14" stroke="#eee" stroke-width="2"/>',
  snap: '<path d="M3 0V16M13 0V16M0 3H16M0 13H16" stroke="#689" stroke-dasharray="2 1"/><rect x="3" y="3" width="10" height="10" fill="#fafafa" stroke="#777"/>',
  line: '<path d="M1 15L15 1" stroke="#222"/>',
  rect: '<rect x=".5" y="3" width="15" height="10" fill="url(#blue)" stroke="#2c6cc4"/>',
  ellipse: '<ellipse cx="8" cy="8" rx="7.500" ry="5" fill="url(#blue)" stroke="#2c6cc4"/>',
  freehand: '<path d="M1 9Q8 4 14 9M2 13Q8 17 14 10" stroke="#d09068" fill="none"/><path d="M12 0L6 9L5 13L8 11L14 2Z" fill="#ffc838" stroke="#c88c18" stroke-width=".6"/>',
  text: '<text x="0" y="14" font-size="15" font-weight="bold" fill="#444" font-family="Liberation Sans, sans-serif">A</text><path d="M11 2.500H16M11 13.500H16M13.500 3V13" stroke="#444" stroke-width="1.500"/>',
  hline: '<path d="M1 3V13M15 2V14M11 2H16M11 14H16" stroke="#222" stroke-width="1.500"/><path d="M1 8H15" stroke="#222" stroke-width="3"/><path d="M3 8H13" stroke="#a08c20"/>',
  balloon: '<path d="M8 1Q15 1 15 6Q15 11 9 11L4 15L5 11Q1 10 1 6Q1 1 8 1Z" fill="#d4ecff" stroke="#3a78b8"/><path d="M8 3V9M5 4V8M11 4V8" stroke="#fff"/>',
  ghost: '<path d="M2 14V7Q3 1 9 1Q15 2 14 9L12 15L8 13L6 15L4 13Z" fill="#fff" stroke="#333"/><path d="M6 5V9M8 4V8M10 4V9M12 5V8" stroke="#999"/>',
  basic: '<path d="M1 1H8L15 8L9 14H5L1 10Z" fill="url(#blue)" stroke="#1c60c0"/><circle cx="10" cy="9" r="4.500" fill="#3c90f0" stroke="#1c60c0"/><path d="M2 14L7 5" stroke="#bdf"/>',
  smile: '<circle cx="8" cy="8" r="7.500" fill="url(#blue)" stroke="#1c60c0"/><path d="M4 9Q8 14 12 9" fill="none" stroke="#1448a0"/><circle cx="5.500" cy="5.500" r="1" fill="#1448a0"/><circle cx="10.500" cy="5.500" r="1" fill="#1448a0"/>',
  arrows: '<path d="M0 8L5 3V6H11V3L16 8L11 13V10H5V13Z" fill="url(#blue)" stroke="#1c60c0" stroke-width=".7"/>',
  flow: '<rect x=".5" y=".5" width="15" height="15" fill="url(#blue)" stroke="#1c60c0"/><path d="M4.500 0V16M0 4.500H16" stroke="#1448a0"/>',
  callout: '<path d="M3 1H14Q16 1 15.500 5L14 10H8L3 15L4 10Q0 10 1 6Z" fill="url(#blue)" stroke="#1c60c0"/>',
  bstar: '<path d="M8 1L10 6H16L11 10L13 16L8 12L3 16L5 10L0 6H6Z" fill="url(#blue)" stroke="#1c60c0" stroke-width=".7"/>',
  points: grey('M2 1H14V5L10 7L11 9L14 12V15H11V12L8 9L3 15H0L4 9Z'),
  fontwork: '<rect x="1" y="1" width="14" height="14" rx="2" fill="#f4f4f8" stroke="#bbb"/>' + letter('A', 'style="font-family:Liberation Sans,sans-serif"'),
};

const gulls = '<path d="M1 1H31Q28 16 31 32H1Z" fill="url(#sea)"/><path d="M3 10Q8 5 12 10Q16 3 28 6Q18 7 13 13Q9 9 3 10ZM3 20Q9 14 14 19Q18 11 31 13Q21 15 15 23Q10 18 3 20Z" fill="#fff"/>';
const screen = '<rect x="1" y="4" width="30" height="24" rx="1" fill="#eee" stroke="#bbb"/><rect x="3" y="6" width="26" height="19" fill="#333"/>';
const mini = (top) => `<rect x="1" y="6" width="30" height="15" fill="#f4f6fb" stroke="#ccd"/><path d="M1 7H31" stroke="${top}" stroke-width="3"/><path d="M3 11H24M3 14H28M3 17H18" stroke="#c4cce4"/>`;
const clap = '<path d="M2 4L26 0L27 5L3 9Z" fill="#222"/><path d="M6 3L9 8M12 2L15 7M18 1L21 6" stroke="#fff" stroke-width="2.500"/>';

const dock = {
  finder: '<rect x="3" y="3" width="26" height="26" fill="#cfdcf8"/><path d="M3 3H17L14 16H17L18 29H3Z" fill="#4a86dc"/><path d="M19 1Q14 9 14 17H18Q18 25 21 31M7 22Q16 27 26 20M9 9V13M23 9V13" fill="none" stroke="#111" stroke-width="1.400"/>',
  dash: '<circle cx="16" cy="16" r="15" fill="#1b1b1b" stroke="#999" stroke-width="1.500"/><g fill="none" stroke="#ccc"><circle cx="16" cy="6" r="2"/><circle cx="7" cy="11" r="2"/><circle cx="25" cy="11" r="2"/><circle cx="6" cy="18" r="1.500"/><circle cx="26" cy="18" r="2"/></g><path d="M6 26L10 23M22 23L26 26" stroke="#c22" stroke-width="2"/><path d="M13 8L16 17" stroke="#f02030" stroke-width="1.500"/><circle cx="16" cy="17" r="2.500" fill="#d02030"/>',
  xcode: '<path d="M3 8L30 6L31 29H1Z" fill="#559cf0" stroke="#2a68c0"/><path d="M8 25L15 11L22 25M6 21H25" stroke="#a8d4ff" fill="none"/><path d="M13 4L21 30" stroke="#222" stroke-width="4"/><path d="M12 2L15 12" stroke="#ccc" stroke-width="3"/><path d="M0 6Q7 -1 19 2L18 6Q9 4 2 9Z" fill="#d8d8d8" stroke="#777"/>',
  monitor: screen + '<path d="M4 16H13L15 10L17 20L19 14L21 16H28" fill="none" stroke="#3cc088"/>',
  blender: '<path d="M1 22L14 11H3L2 7H17L13 3L17 0L30 13Q34 22 26 28Q16 32 9 23L4 26Z" fill="#f48c1c" stroke="#c46810" stroke-width=".5"/><circle cx="21" cy="18" r="8" fill="#fff"/><circle cx="21" cy="18" r="5" fill="#155c9c"/>',
  mail: '<path d="M3 4L26 1L31 28L7 31Z" fill="#fff" stroke="#ddd" stroke-dasharray="2 1" stroke-width="2"/><path d="M5 7L25 4L28 26L9 28Z" fill="#6c9fe4"/><path d="M8 10Q15 10 17 16L26 13L20 22L12 25L15 19Q10 16 8 10Z" fill="#4b3828"/><rect x="12" y="0" width="20" height="11" rx="5.500" fill="#dc1420"/><text x="22" y="8" text-anchor="middle" font-size="7" font-weight="bold" fill="#fff" font-family="Liberation Sans, sans-serif">3821</text>',
  safari: '<circle cx="16" cy="16" r="15" fill="#ccc" stroke="#777"/><circle cx="16" cy="16" r="12" fill="url(#ocean)"/><path d="M16 5V8M16 24V27M5 16H8M24 16H27" stroke="#fff"/><path d="M25 6L18 18L14 14Z" fill="#e83c28"/><path d="M7 26L18 18L14 14Z" fill="#eef"/>',
  xchat: '<rect x="1" y="4" width="30" height="26" fill="#6c7896" stroke="#eee" stroke-width="2"/><text x="3" y="20" font-size="8" fill="#222" font-family="Liberation Serif, serif">C</text><text x="24" y="20" font-size="8" fill="#222" font-family="Liberation Serif, serif">T</text><text x="16" y="25" text-anchor="middle" font-size="22" font-weight="bold" fill="#fff" font-family="Liberation Serif, serif">X</text>',
  browser: '<circle cx="15" cy="14" r="14" fill="url(#purple)"/><path d="M3 10Q12 18 27 8M15 0Q6 12 15 28" stroke="#efc0e8" stroke-opacity=".5" fill="none"/><path d="M8 21L18 18L26 30L12 26Z" fill="#c8141c"/><path d="M18 20Q27 14 28 24L22 31Z" fill="#f0d8d0"/>',
  gimp: '<path d="M1 12Q8 15 12 13L21 10L30 1Q34 18 26 24Q16 30 8 24Q2 20 1 12Z" fill="#a89274" stroke="#5a4836"/><circle cx="11" cy="15" r="3" fill="#fff"/><circle cx="16" cy="14" r="4" fill="#fff"/><circle cx="16" cy="15" r="1.800"/><circle cx="11" cy="16" r="1.200"/><path d="M1 12L6 18L3 19Z" fill="#111"/><path d="M8 22L20 21" stroke="#222"/>',
  writer: gulls,
  itunes: '<circle cx="15" cy="17" r="14" fill="#dce4e8" stroke="#aab"/><path d="M15 17L4 9A14 14 0 0 1 12 3Z" fill="#f8e0a8"/><path d="M15 17L28 22A14 14 0 0 1 20 30Z" fill="#a8d4f8"/><circle cx="15" cy="17" r="4" fill="#99a"/><path d="M13 25V4L28 2V22M13 9L28 7" fill="none" stroke="#2a9c30" stroke-width="3"/><circle cx="11" cy="25" r="3.500" fill="#34ac38"/><circle cx="25" cy="22" r="3.500" fill="#34ac38"/>',
  crypt: '<rect width="32" height="32" fill="#101080"/><path d="M0 0L9 9H23L32 0Z" fill="#0c0c70"/><path d="M0 32L9 23H23L32 32Z" fill="#18188c"/><rect x="10" y="10" width="12" height="12" fill="#151590" stroke="#0b0b70" stroke-width="2"/>',
  iphoto: '<path d="M1 5L27 1L30 20L5 26Z" fill="url(#sunset)" stroke="#fff" stroke-width="2"/><path d="M15 20Q17 12 14 7M14 7L6 8M14 7L24 6M14 7L20 12M14 7L9 13" stroke="#111" stroke-width="2" fill="none"/><rect x="11" y="18" width="21" height="13" rx="2" fill="#9cacb8" stroke="#445"/><circle cx="24" cy="24" r="4.500" fill="#456" stroke="#ddd"/>',
  chess: '<path d="M1 21L16 13L31 21L16 30Z" fill="#b4ac9c" stroke="#786c5c"/><path d="M9 27Q16 30 23 27L20 22Q23 9 14 2L12 6L7 11L9 13L14 11Q14 16 12 22Z" fill="#9b7a48" stroke="#463018"/>',
  imovie: '<path d="M2 9L29 8L31 27L6 31Z" fill="#111" stroke="#777"/><path d="M5 12L27 11L28 25L8 28Z" fill="#2c90ec"/><path d="M5 17Q16 11 28 20V25L8 28Z" fill="#0a50a8"/><path d="M10 15Q18 12 26 15" stroke="#a4dcff" fill="none"/>' + clap,
  idvd: '<circle cx="16" cy="17" r="14" fill="#3c96e8" stroke="#aac"/><path d="M3 20Q16 9 29 20Q27 31 16 31T3 20Z" fill="#1450a4"/><circle cx="16" cy="15" r="5" fill="#d0d8e8" stroke="#777"/><circle cx="16" cy="15" r="1.500" fill="#456"/>' + clap,
  garage: '<path d="M17 15L30 1" stroke="#633c1c" stroke-width="3"/><path d="M28 1L32 4" stroke="#ddd" stroke-width="2"/><path d="M2 17Q6 10 12 13Q18 9 20 14Q18 18 22 22Q24 30 15 30Q10 32 6 28Q0 26 2 17Z" fill="#d47c20" stroke="#70380c"/><path d="M7 18L17 23M6 23L13 27" stroke="#f8e8c8" stroke-width="2"/>',
  maya: '<rect x="1" y="1" width="30" height="30" rx="1" fill="url(#ocean)" stroke="#e8f4ff"/><text x="15" y="25" text-anchor="middle" font-size="28" font-weight="bold" font-style="italic" fill="#fff" font-family="Liberation Sans, sans-serif">m</text>',
  circuit: '<path d="M1 8L23 1L30 25L9 31Z" fill="#206c28" stroke="#d8c058"/><path d="M7 9Q15 4 18 11T24 20Q15 26 11 18T18 8M8 18Q17 14 23 25" stroke="#a4e8a0" fill="none" stroke-width="1.200"/><path d="M30 12L24 30" stroke="#2a4470" stroke-width="2"/>',
  album: '<path d="M3 3L27 1L30 26L6 30Z" fill="#d8b078" stroke="#8a5c28"/><path d="M1 8L20 6L22 27L3 29Z" fill="#f6f4ee"/><path d="M4 11H12M4 14H18M4 18H12M4 22H15" stroke="#999"/><path d="M16 16L31 14V26L17 28Z" fill="#f49a20" stroke="#fff"/><path d="M20 24V18M27 24V18" stroke="#432"/>',
  ical: '<path d="M2 6L28 2L31 27L6 31Z" fill="#f8f8f8" stroke="#aaa"/><path d="M2 6L28 2L29 9L3 13Z" fill="#cc3838"/><path d="M8 3V8M23 1V6" stroke="#eee" stroke-width="2"/><text x="17" y="26" text-anchor="middle" font-size="15" font-weight="bold" fill="#222" font-family="Liberation Sans, sans-serif">17</text><text x="4" y="11" font-size="5" fill="#fff" font-family="Liberation Sans, sans-serif">JUL</text>',
  booth: '<path d="M1 1H24V30H1Z" fill="#a81418" stroke="#ccc"/><path d="M4 2V22M8 2V22M13 2V22M18 2V22M22 2V22" stroke="#d42420"/><path d="M2 23H23V30H2Z" fill="#222"/><path d="M23 9L31 12L26 31L18 28Z" fill="#eee"/><path d="M23 13L28 14M22 18L27 20M20 24L25 26" stroke="#643" stroke-width="4"/>',
  sysinfo: '<rect x="1" y="3" width="29" height="26" fill="#e2e2e4" stroke="#ccc"/><path d="M22 6Q18 7 19 11Q22 10 22 6ZM18 12Q12 10 12 17Q13 24 17 25L20 24L23 25Q26 23 27 20Q23 18 26 13Q23 10 18 12Z" fill="#999"/><rect x="4" y="12" width="4" height="8" rx="2" fill="none" stroke="#aaa"/>',
  x11: '<rect x="1" y="3" width="29" height="26" fill="#f8f8f8" stroke="#ccc"/><text x="16" y="26" text-anchor="middle" font-size="28" fill="#111" font-family="Liberation Serif, serif">X</text>',
  textedit: '<path d="M3 5L23 1L28 26L7 31Z" fill="#f4f4f4" stroke="#aaa"/><path d="M1 18L6 30L14 30Z" fill="#f4dc4c"/><path d="M7 9L20 7M8 13L22 11M8 16L23 14M9 20L22 18M10 24L20 22" stroke="#999"/><path d="M30 9L19 30" stroke="#888" stroke-width="2"/>',
  terminal: screen + '<text x="5" y="14" font-size="9" font-weight="bold" fill="#eee" font-family="Liberation Mono, monospace">&gt;_</text>',
  remote: '<path d="M9 14L29 12L31 27L12 30Z" fill="#266cc0"/><path d="M5 10L27 9L29 24L8 26Z" fill="#2c9038"/><path d="M1 6Q13 2 25 5V18L4 22Q1 14 1 6Z" fill="#c02038"/><path d="M19 17L28 27" stroke="#f4a020" stroke-width="4"/><path d="M13 12Q13 17 18 16Q21 14 19 10" fill="none" stroke="#eee" stroke-width="3"/>',
  preview: '<path d="M4 1L25 0L26 20L5 24Z" fill="#bc8450" stroke="#eee"/><path d="M1 10L22 3L29 23L9 30Z" fill="#588ccc" stroke="#fff" stroke-width="2"/><circle cx="14" cy="13" r="3" fill="#a76"/><path d="M10 24Q9 17 16 16L20 22Z" fill="#222"/><circle cx="24" cy="17" r="6" fill="#445" stroke="#bbb" stroke-width="2"/><path d="M20 24H31V29Q25 32 20 29Z" fill="#889"/><circle cx="22" cy="15" r="1.500" fill="#fff"/>',
  spring: '<ellipse cx="16" cy="12" rx="11" ry="12" fill="#ccc" stroke="#888"/><text x="16" y="18" text-anchor="middle" font-size="18" fill="#555" font-family="Liberation Sans, sans-serif">@</text><path d="M11 25H21M12 27H20" stroke="#eee" stroke-width="2"/><ellipse cx="16" cy="29" rx="8" ry="3" fill="#aaa" stroke="#777" stroke-width=".5"/>',
  win1: mini('#b8c8e8') + '<rect x="21" y="18" width="10" height="10" fill="#4478c0"/><circle cx="27" cy="18" r="4" fill="#d22"/>',
  win2: mini('#ecac30') + '<rect x="20" y="18" width="11" height="11" fill="#2a84c8"/><text x="25" y="27" text-anchor="middle" font-size="10" font-weight="bold" font-style="italic" fill="#fff" font-family="Liberation Sans, sans-serif">m</text>',
  win3: mini('#c4cce8') + '<circle cx="26" cy="23" r="5.500" fill="url(#purple)"/>',
  win4: '<rect x="1" y="5" width="30" height="20" fill="#fafafa" stroke="#ccc"/><path d="M3 8H8M3 11H8M3 14H8M3 17H8" stroke="#ccc"/><rect x="21" y="20" width="10" height="9" fill="#333" stroke="#888"/>',
  trash: '<path d="M4 6L7 29Q16 33 25 29L28 6Z" fill="#4e5560" fill-opacity=".85" stroke="#999"/><path d="M8 9L10 29M12 10L13 30M16 10V30M20 10L19 30M24 9L22 29M5 13H27M6 18H26M6 23H26" stroke="#a4aab4" stroke-width=".6"/><ellipse cx="16" cy="6" rx="12" ry="4" fill="#444a56" stroke="#c4c8d0" stroke-width="1.500"/>',
};

const apps = bar('*finder *dash *xcode *monitor blender *mail *safari xchat *browser gimp writer itunes crypt iphoto chess imovie idvd garage *maya circuit album ical booth sysinfo x11 *textedit *terminal remote *preview *writer');
const docs = bar('spring win1 win2 win3 win4 trash');
</script>

<style>
body {
  margin: 0;
}
</style>

<style scoped>
.desktop {
  position: relative;
  min-height: 100vh;
  overflow: hidden;
  font-family: "Noto Sans", sans-serif;
  font-size: 13px;
  line-height: 15px;
}

button {
  padding: 0;
  border: 0;
  background: none;
  font: inherit;
  color: inherit;
}

svg {
  display: block;
  flex-shrink: 0;
}

i {
  display: block;
}

.wallpaper {
  position: absolute;
  inset: 0;
  width: 100%;
  height: 100%;
}

.menubar {
  position: relative;
  box-sizing: border-box;
  display: flex;
  align-items: center;
  height: 22px;
  padding: 0 20px;
  border-radius: 8px 8px 0 0;
  background: linear-gradient(#fff, #f0f0f0 50%, #fff);
  box-shadow: 0 1px 3px rgba(0, 0, 0, 0.6);
}

.app-name {
  margin-left: 18px;
  font-size: 14px;
}

.pager {
  display: flex;
  gap: 3px;
  margin-left: auto;
  margin-right: 6px;
}

.pager i {
  box-sizing: border-box;
  width: 32px;
  height: 19px;
  border: 1px solid #111;
  background: #f4f4f4;
}

.pager .current {
  border: 2px solid #111;
  background: #fff;
  box-shadow: inset 0 -2px 0 #3c6cac, 0 0 0 1px #8ab8f0;
}

.bt {
  margin: 0 15px 0 18px;
}

.menubar .bt + svg {
  margin-right: 10px;
}

.clock {
  margin-left: 16px;
  font-size: 15px;
}

.user {
  margin-left: 16px;
  font-size: 14px;
}

.spot {
  margin-left: 15px;
}

.volumes {
  position: absolute;
  top: 29px;
  right: 0;
  width: 156px;
}

.file {
  display: flex;
  flex-direction: column;
  align-items: center;
  height: 64px;
  margin: 0;
  color: #fff;
  font-weight: 500;
  line-height: 15px;
  text-align: center;
  white-space: pre;
  text-shadow: 0 1px 2px #000, 0 1px 3px #000;
}

.file figcaption {
  margin-top: 3px;
}

.file svg {
  text-shadow: none;
}

.shots {
  position: absolute;
  top: 733px;
  right: 156px;
  display: grid;
  grid-template-columns: repeat(6, 156px);
}

.xterm {
  position: absolute;
  top: 777px;
  left: 56px;
  width: 156px;
}

.window {
  position: absolute;
  inset: 26px 115px 161px 44px;
  display: flex;
  flex-direction: column;
  border-radius: 8px 8px 0 0;
  background: linear-gradient(90deg, #c2c2c2, #eaeaea 65%, #f9f9f9 82%);
  box-shadow: 0 8px 18px rgba(0, 0, 0, 0.7);
  font-family: "Liberation Serif", serif;
  font-weight: bold;
}

.titlebar {
  position: relative;
  box-sizing: border-box;
  display: flex;
  align-items: center;
  height: 21px;
  border-bottom: 1px solid #888;
  border-radius: 8px 8px 0 0;
  background: linear-gradient(#f4f4f4, #c8c8c8);
}

.titlebar h1 {
  flex: 1;
  margin: 0 64px 2px 0;
  font: 13px "Noto Sans", sans-serif;
  text-align: center;
}

.lights {
  display: flex;
  gap: 8px;
  padding-left: 8px;
}

.lights button {
  width: 13px;
  height: 13px;
  border-radius: 50%;
  box-shadow: inset 0 1px 2px rgba(0, 0, 0, 0.8), inset 0 0 1px #000;
}

.red {
  background: linear-gradient(#c44, #e64848 50%, #ffb0a8);
}

.amber {
  background: linear-gradient(#d08020, #f4a030 50%, #ffec90);
}

.green {
  background: linear-gradient(#3c8420, #66b83c 50%, #ccf890);
}

.menus {
  display: flex;
  align-items: center;
  height: 31px;
  padding-left: 12px;
}

.menus button {
  padding-top: 5px;
  text-align: left;
}

.menus .close-doc {
  margin-left: auto;
  padding: 0 13px 1px 0;
}

.row {
  display: flex;
  height: 27px;
}

.bar {
  box-sizing: border-box;
  display: flex;
  align-items: center;
  padding: 0 0 2px 4px;
  background: linear-gradient(#fafafa, #d0d0d0);
}

.row.tall {
  height: 35px;
}

.grip {
  width: 2px;
  height: 19px;
  margin-right: 6px;
  background: repeating-linear-gradient(#333 0 2px, transparent 2px 4px);
}

.sep {
  width: 2px;
  height: 12px;
  margin: 0 3px;
  background: #bbb;
}

.tool {
  box-sizing: border-box;
  display: flex;
  align-items: center;
  justify-content: center;
  width: 23px;
  height: 23px;
}

.tool.on {
  border: 1px solid #3a3aa0;
  background: #b4b4d8;
}

.drop {
  width: 11px;
  height: 23px;
  background: linear-gradient(#111, #111) 50% 50% / 5px 3px no-repeat;
  clip-path: polygon(0 0, 100% 0, 8px 10px, 6px 13px, 5px 13px, 3px 10px);
}

.drop.dim {
  opacity: 0.5;
}

.more {
  position: relative;
  width: 10px;
  height: 21px;
  margin: 0 2px 0 6px;
  background: linear-gradient(#999, #b8b8b8);
}

.tall .more {
  height: 29px;
}

.more::after {
  content: "";
  position: absolute;
  left: 2px;
  bottom: 2px;
  border: 3px solid transparent;
  border-top-color: #000;
  border-bottom: 0;
}

.word {
  padding: 2px 4px 0 3px;
}

.combos {
  display: flex;
  gap: 9px;
  margin: 0 9px 0 8px;
}

.combo {
  position: relative;
  display: flex;
}

.combo select {
  appearance: none;
  width: 100%;
  height: 31px;
  padding: 5px 20px 0 2px;
  border: 1px solid #eee;
  border-top: 2px solid #222;
  border-left: 2px solid #222;
  border-radius: 0;
  background: #fff;
  color: #000;
  font: inherit;
}

.combo i {
  position: absolute;
  top: 2px;
  right: 1px;
  box-sizing: border-box;
  width: 15px;
  height: 27px;
  border: 1px solid #eee;
  border-right-color: #222;
  border-bottom-color: #222;
  background: #c0c0c0;
  pointer-events: none;
}

.combo i::after {
  content: "";
  position: absolute;
  top: 11px;
  left: 3px;
  border: 4px solid transparent;
  border-top-color: #000;
  border-bottom: 0;
}

.medium {
  width: 210px;
}

.large {
  width: 235px;
}

.small {
  width: 93px;
}

.editor {
  flex: 1;
  display: flex;
  min-height: 0;
  margin: 1px 2px 2px 1px;
  border-top: 1px solid #000;
  border-left: 1px solid #000;
  background: #c0c0c0;
}

.view {
  flex: 1;
  display: flex;
  flex-direction: column;
  min-width: 0;
}

.top-ruler {
  display: flex;
  height: 28px;
  padding: 4px 0 0 2px;
  box-sizing: border-box;
}

.top-ruler text,
.side-ruler text {
  font: 13px "Noto Sans", sans-serif;
  fill: #222;
  text-anchor: middle;
}

.tab-kind {
  box-sizing: border-box;
  width: 22px;
  height: 21px;
  margin-right: 48px;
  padding-left: 7px;
  border: 1px solid #999;
  border-right-color: #eee;
  border-bottom-color: #eee;
}

.pane {
  flex: 1;
  display: flex;
  min-height: 0;
  overflow: hidden;
}

.side-ruler {
  width: 25px;
  padding-left: 3px;
}

.canvas {
  flex: 1;
  overflow: hidden;
  border-top: 2px solid #555;
  border-left: 2px solid #555;
  background: #999;
}

.page {
  box-sizing: border-box;
  width: 875px;
  min-height: 600px;
  margin: 33px 0 0 41px;
  padding: 84px 83px 0;
  border: 1px solid #000;
  border-right-width: 3px;
  background: #fff;
}

.text-area {
  min-height: 500px;
  padding-top: 1px;
  border: 1px solid #c0c0c0;
}

.text-area p {
  margin: 0 0 0 -1px;
  line-height: 20px;
}

table {
  width: calc(100% + 2px);
  margin: 19px -1px 0;
  border-collapse: collapse;
  table-layout: fixed;
  background: #ccccff;
}

th,
td {
  height: 29px;
  padding: 3px 2px 0;
  box-sizing: border-box;
  border: 1px solid #223;
  font-size: 13px;
  text-align: right;
}

th {
  height: 28px;
  background: #666699;
  color: #fff;
  text-align: center;
}

.text-area .blue {
  margin: 21px 0 27px 2px;
  color: #0000e0;
  text-shadow: 1px 1px 0 #446;
}

.text-frame {
  box-sizing: border-box;
  width: 622px;
  margin-left: 7px;
  padding: 5px;
  border: 1px solid #000;
}

.text-frame div {
  height: 38px;
  padding-top: 1px;
  border: 1px solid #c0c0c0;
}

.text-frame p {
  margin-left: 0;
}

.text-area .last {
  margin: 11px 0 0 2px;
}

.hscroll {
  display: flex;
  height: 16px;
  background: #c0c0c0;
}

.hscroll button,
.vscroll button,
.thumb {
  box-sizing: border-box;
  display: flex;
  align-items: center;
  justify-content: center;
  width: 16px;
  height: 16px;
  border: 1px solid #f4f4f4;
  border-right-color: #111;
  border-bottom-color: #111;
  background: #c0c0c0;
}

.hscroll .thumb {
  flex: 1;
}

.vscroll {
  display: flex;
  flex-direction: column;
  width: 16px;
}

.vscroll .thumb {
  height: 133px;
  margin-top: 2px;
}

.track {
  flex: 1;
  background: #ccc;
}

.corner {
  height: 16px;
}

.status {
  position: relative;
  box-sizing: border-box;
  display: flex;
  height: 24px;
  gap: 4px;
  padding: 2px 5px 1px;
  background: #c0c0c0;
}

.status span {
  box-sizing: border-box;
  padding: 4px 0 0 5px;
  border: 1px solid #888;
  border-right-color: #fff;
  border-bottom-color: #fff;
  white-space: nowrap;
}

.status .centered {
  padding-left: 0;
  text-align: center;
}

.status .rest {
  flex: 1;
}

.resize {
  position: absolute;
  right: 0;
  bottom: 0;
}

.dock {
  position: absolute;
  bottom: 0;
  left: 114px;
  display: flex;
  gap: 1px;
}

.dock-apps,
.dock-docs {
  display: flex;
  height: 42px;
  border-top: 1px solid #a8b0d4;
  border-left: 1px solid #98a2c8;
  background: rgba(142, 152, 194, 0.85);
}

.dock-apps {
  padding: 0 8px 0 3px;
}

.dock-docs {
  padding: 0 4px 0 5px;
  border-right: 1px solid #98a2c8;
}

.dock button {
  position: relative;
  width: 33px;
  padding: 4px 0 6px;
}

.running::after {
  content: "";
  position: absolute;
  left: 12px;
  bottom: 0;
  border: 4px solid transparent;
  border-top: 0;
  border-bottom-color: #000;
}

.space-name {
  position: absolute;
  right: 11px;
  bottom: 10px;
  color: #c8d0ea;
  font-size: 14px;
  font-weight: 500;
}
</style>
